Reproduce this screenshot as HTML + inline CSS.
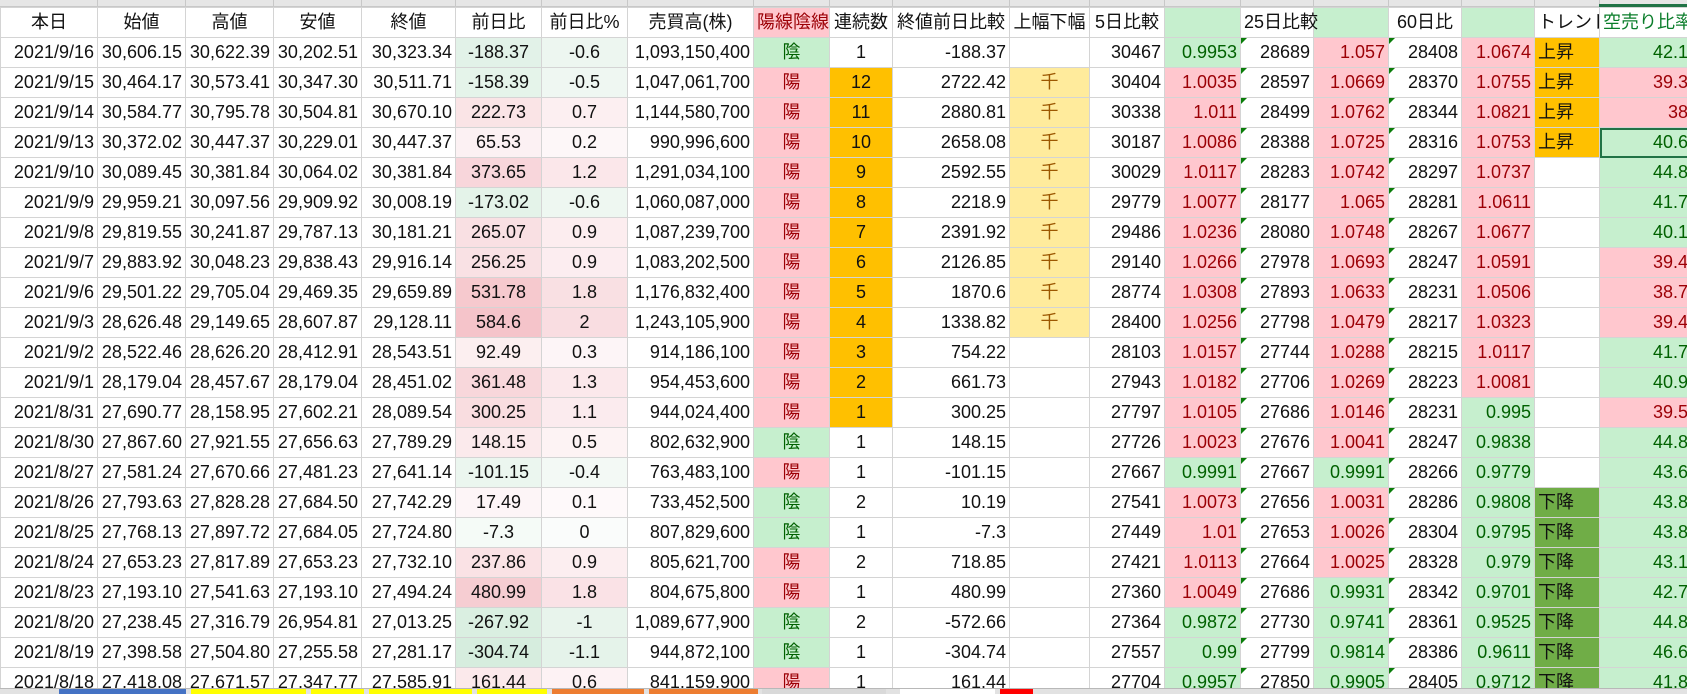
<!DOCTYPE html>
<html><head><meta charset="utf-8"><style>
html,body{margin:0;padding:0;background:#fff;width:1687px;height:694px;overflow:hidden}
body{position:relative;font-family:"Liberation Sans","Noto Sans CJK JP",sans-serif;font-size:18px;color:#111}
.strip{position:absolute;left:0;top:0;width:1687px;height:7px;background:#e6e6e6;border-bottom:1px solid #c8c8c8;box-sizing:border-box}
.strip i{position:absolute;top:0;width:1px;height:7px;background:#c8c8c8}
table{position:absolute;left:0;top:7px;border-collapse:collapse;table-layout:fixed;width:1691px}
td{border:1px solid #d4d4d4;height:29px;padding:0 3px;white-space:nowrap;overflow:visible;line-height:29px;box-sizing:border-box}
tr.h td{height:29px;text-align:center}
td{text-align:right}
.c{text-align:center}.l{text-align:left}
.p{background:#ffc7ce;color:#9c0006}
.g{background:#c6efce;color:#006100}
.y{background:#ffeb9c;color:#9c5700}
.o{background:#ffc000}
.dg{background:#70ad47}
.t{position:relative}
.t:before{content:"";position:absolute;left:0;top:0;border-top:6px solid #0a7d0a;border-right:6px solid transparent}
.sel{outline:2px solid #217346;outline-offset:-2px}
.tabs{position:absolute;left:0;top:688px;width:1687px;height:6px;background:#e2e2e2;border-top:1px solid #b8b8b8;box-sizing:border-box}
.tabs i{position:absolute;top:0;height:6px}
</style></head><body>
<div class="strip"><i style="left:97px"></i><i style="left:185px"></i><i style="left:273px"></i><i style="left:361px"></i><i style="left:455px"></i><i style="left:541px"></i><i style="left:627px"></i><i style="left:753px"></i><i style="left:829px"></i><i style="left:892px"></i><i style="left:1009px"></i><i style="left:1089px"></i><i style="left:1164px"></i><i style="left:1240px"></i><i style="left:1313px"></i><i style="left:1388px"></i><i style="left:1461px"></i><i style="left:1534px"></i><i style="left:1599px"></i><div style="position:absolute;left:1599px;top:4px;width:88px;height:3px;background:#217346"></div></div>
<table>
<colgroup><col style="width:97px"><col style="width:88px"><col style="width:88px"><col style="width:88px"><col style="width:94px"><col style="width:86px"><col style="width:86px"><col style="width:126px"><col style="width:76px"><col style="width:63px"><col style="width:117px"><col style="width:80px"><col style="width:75px"><col style="width:76px"><col style="width:73px"><col style="width:75px"><col style="width:73px"><col style="width:73px"><col style="width:65px"><col style="width:92px"></colgroup>
<tr class="h"><td>本日</td><td>始値</td><td>高値</td><td>安値</td><td>終値</td><td>前日比</td><td>前日比%</td><td>売買高(株)</td><td class="p">陽線陰線</td><td>連続数</td><td>終値前日比較</td><td>上幅下幅</td><td class="l">5日比較</td><td class="g"></td><td class="l">25日比較</td><td class="g"></td><td class="l">60日比</td><td class="g"></td><td class="l" style="overflow:hidden">トレンド</td><td class="l" style="color:#0a7d2a">空売り比率</td></tr>
<tr><td>2021/9/16</td><td>30,606.15</td><td>30,622.39</td><td>30,202.51</td><td>30,323.34</td><td class="c" style="background:rgb(226,242,232)">-188.37</td><td class="c" style="background:rgb(237,246,240)">-0.6</td><td>1,093,150,400</td><td class="c g">陰</td><td class="c">1</td><td>-188.37</td><td></td><td>30467</td><td class="g">0.9953</td><td class="t">28689</td><td class="p">1.057</td><td class="t">28408</td><td class="p">1.0674</td><td class="l o">上昇</td><td class="g">42.1</td></tr>
<tr><td>2021/9/15</td><td>30,464.17</td><td>30,573.41</td><td>30,347.30</td><td>30,511.71</td><td class="c" style="background:rgb(229,244,234)">-158.39</td><td class="c" style="background:rgb(239,247,242)">-0.5</td><td>1,047,061,700</td><td class="c p">陽</td><td class="c o">12</td><td>2722.42</td><td class="c y">千</td><td>30404</td><td class="p">1.0035</td><td class="t">28597</td><td class="p">1.0669</td><td class="t">28370</td><td class="p">1.0755</td><td class="l o">上昇</td><td class="p">39.3</td></tr>
<tr><td>2021/9/14</td><td>30,584.77</td><td>30,795.78</td><td>30,504.81</td><td>30,670.10</td><td class="c" style="background:rgb(250,228,230)">222.73</td><td class="c" style="background:rgb(252,239,241)">0.7</td><td>1,144,580,700</td><td class="c p">陽</td><td class="c o">11</td><td>2880.81</td><td class="c y">千</td><td>30338</td><td class="p">1.011</td><td class="t">28499</td><td class="p">1.0762</td><td class="t">28344</td><td class="p">1.0821</td><td class="l o">上昇</td><td class="p">38</td></tr>
<tr><td>2021/9/13</td><td>30,372.02</td><td>30,447.37</td><td>30,229.01</td><td>30,447.37</td><td class="c" style="background:rgb(252,241,243)">65.53</td><td class="c" style="background:rgb(253,247,248)">0.2</td><td>990,996,600</td><td class="c p">陽</td><td class="c o">10</td><td>2658.08</td><td class="c y">千</td><td>30187</td><td class="p">1.0086</td><td class="t">28388</td><td class="p">1.0725</td><td class="t">28316</td><td class="p">1.0753</td><td class="l o">上昇</td><td class="g sel">40.6</td></tr>
<tr><td>2021/9/10</td><td>30,089.45</td><td>30,381.84</td><td>30,064.02</td><td>30,381.84</td><td class="c" style="background:rgb(248,214,219)">373.65</td><td class="c" style="background:rgb(251,231,234)">1.2</td><td>1,291,034,100</td><td class="c p">陽</td><td class="c o">9</td><td>2592.55</td><td class="c y">千</td><td>30029</td><td class="p">1.0117</td><td class="t">28283</td><td class="p">1.0742</td><td class="t">28297</td><td class="p">1.0737</td><td></td><td class="g">44.8</td></tr>
<tr><td>2021/9/9</td><td>29,959.21</td><td>30,097.56</td><td>29,909.92</td><td>30,008.19</td><td class="c" style="background:rgb(228,243,233)">-173.02</td><td class="c" style="background:rgb(238,247,241)">-0.6</td><td>1,060,087,000</td><td class="c p">陽</td><td class="c o">8</td><td>2218.9</td><td class="c y">千</td><td>29779</td><td class="p">1.0077</td><td class="t">28177</td><td class="p">1.065</td><td class="t">28281</td><td class="p">1.0611</td><td></td><td class="g">41.7</td></tr>
<tr><td>2021/9/8</td><td>29,819.55</td><td>30,241.87</td><td>29,787.13</td><td>30,181.21</td><td class="c" style="background:rgb(249,224,227)">265.07</td><td class="c" style="background:rgb(252,237,239)">0.9</td><td>1,087,239,700</td><td class="c p">陽</td><td class="c o">7</td><td>2391.92</td><td class="c y">千</td><td>29486</td><td class="p">1.0236</td><td class="t">28080</td><td class="p">1.0748</td><td class="t">28267</td><td class="p">1.0677</td><td></td><td class="g">40.1</td></tr>
<tr><td>2021/9/7</td><td>29,883.92</td><td>30,048.23</td><td>29,838.43</td><td>29,916.14</td><td class="c" style="background:rgb(249,225,228)">256.25</td><td class="c" style="background:rgb(252,237,240)">0.9</td><td>1,083,202,500</td><td class="c p">陽</td><td class="c o">6</td><td>2126.85</td><td class="c y">千</td><td>29140</td><td class="p">1.0266</td><td class="t">27978</td><td class="p">1.0693</td><td class="t">28247</td><td class="p">1.0591</td><td></td><td class="p">39.4</td></tr>
<tr><td>2021/9/6</td><td>29,501.22</td><td>29,705.04</td><td>29,469.35</td><td>29,659.89</td><td class="c" style="background:rgb(246,201,206)">531.78</td><td class="c" style="background:rgb(249,224,227)">1.8</td><td>1,176,832,400</td><td class="c p">陽</td><td class="c o">5</td><td>1870.6</td><td class="c y">千</td><td>28774</td><td class="p">1.0308</td><td class="t">27893</td><td class="p">1.0633</td><td class="t">28231</td><td class="p">1.0506</td><td></td><td class="p">38.7</td></tr>
<tr><td>2021/9/3</td><td>28,626.48</td><td>29,149.65</td><td>28,607.87</td><td>29,128.11</td><td class="c" style="background:rgb(245,196,202)">584.6</td><td class="c" style="background:rgb(249,221,225)">2</td><td>1,243,105,900</td><td class="c p">陽</td><td class="c o">4</td><td>1338.82</td><td class="c y">千</td><td>28400</td><td class="p">1.0256</td><td class="t">27798</td><td class="p">1.0479</td><td class="t">28217</td><td class="p">1.0323</td><td></td><td class="p">39.4</td></tr>
<tr><td>2021/9/2</td><td>28,522.46</td><td>28,626.20</td><td>28,412.91</td><td>28,543.51</td><td class="c" style="background:rgb(252,239,240)">92.49</td><td class="c" style="background:rgb(253,245,247)">0.3</td><td>914,186,100</td><td class="c p">陽</td><td class="c o">3</td><td>754.22</td><td></td><td>28103</td><td class="p">1.0157</td><td class="t">27744</td><td class="p">1.0288</td><td class="t">28215</td><td class="p">1.0117</td><td></td><td class="g">41.7</td></tr>
<tr><td>2021/9/1</td><td>28,179.04</td><td>28,457.67</td><td>28,179.04</td><td>28,451.02</td><td class="c" style="background:rgb(248,215,219)">361.48</td><td class="c" style="background:rgb(251,232,235)">1.3</td><td>954,453,600</td><td class="c p">陽</td><td class="c o">2</td><td>661.73</td><td></td><td>27943</td><td class="p">1.0182</td><td class="t">27706</td><td class="p">1.0269</td><td class="t">28223</td><td class="p">1.0081</td><td></td><td class="g">40.9</td></tr>
<tr><td>2021/8/31</td><td>27,690.77</td><td>28,158.95</td><td>27,602.21</td><td>28,089.54</td><td class="c" style="background:rgb(249,221,224)">300.25</td><td class="c" style="background:rgb(251,235,238)">1.1</td><td>944,024,400</td><td class="c p">陽</td><td class="c o">1</td><td>300.25</td><td></td><td>27797</td><td class="p">1.0105</td><td class="t">27686</td><td class="p">1.0146</td><td class="t">28231</td><td class="g">0.995</td><td></td><td class="p">39.5</td></tr>
<tr><td>2021/8/30</td><td>27,867.60</td><td>27,921.55</td><td>27,656.63</td><td>27,789.29</td><td class="c" style="background:rgb(251,234,236)">148.15</td><td class="c" style="background:rgb(253,243,244)">0.5</td><td>802,632,900</td><td class="c g">陰</td><td class="c">1</td><td>148.15</td><td></td><td>27726</td><td class="p">1.0023</td><td class="t">27676</td><td class="p">1.0041</td><td class="t">28247</td><td class="g">0.9838</td><td></td><td class="g">44.8</td></tr>
<tr><td>2021/8/27</td><td>27,581.24</td><td>27,670.66</td><td>27,481.23</td><td>27,641.14</td><td class="c" style="background:rgb(235,246,239)">-101.15</td><td class="c" style="background:rgb(243,249,245)">-0.4</td><td>763,483,100</td><td class="c p">陽</td><td class="c">1</td><td>-101.15</td><td></td><td>27667</td><td class="g">0.9991</td><td class="t">27667</td><td class="g">0.9991</td><td class="t">28266</td><td class="g">0.9779</td><td></td><td class="g">43.6</td></tr>
<tr><td>2021/8/26</td><td>27,793.63</td><td>27,828.28</td><td>27,684.50</td><td>27,742.29</td><td class="c" style="background:rgb(253,245,247)">17.49</td><td class="c" style="background:rgb(254,249,250)">0.1</td><td>733,452,500</td><td class="c g">陰</td><td class="c">2</td><td>10.19</td><td></td><td>27541</td><td class="p">1.0073</td><td class="t">27656</td><td class="p">1.0031</td><td class="t">28286</td><td class="g">0.9808</td><td class="l dg">下降</td><td class="g">43.8</td></tr>
<tr><td>2021/8/25</td><td>27,768.13</td><td>27,897.72</td><td>27,684.05</td><td>27,724.80</td><td class="c" style="background:rgb(245,251,247)">-7.3</td><td class="c" style="background:rgb(250,252,251)">0</td><td>807,829,600</td><td class="c g">陰</td><td class="c">1</td><td>-7.3</td><td></td><td>27449</td><td class="p">1.01</td><td class="t">27653</td><td class="p">1.0026</td><td class="t">28304</td><td class="g">0.9795</td><td class="l dg">下降</td><td class="g">43.8</td></tr>
<tr><td>2021/8/24</td><td>27,653.23</td><td>27,817.89</td><td>27,653.23</td><td>27,732.10</td><td class="c" style="background:rgb(250,226,229)">237.86</td><td class="c" style="background:rgb(252,238,240)">0.9</td><td>805,621,700</td><td class="c p">陽</td><td class="c">2</td><td>718.85</td><td></td><td>27421</td><td class="p">1.0113</td><td class="t">27664</td><td class="p">1.0025</td><td class="t">28328</td><td class="g">0.979</td><td class="l dg">下降</td><td class="g">43.1</td></tr>
<tr><td>2021/8/23</td><td>27,193.10</td><td>27,541.63</td><td>27,193.10</td><td>27,494.24</td><td class="c" style="background:rgb(246,205,210)">480.99</td><td class="c" style="background:rgb(250,226,230)">1.8</td><td>804,675,800</td><td class="c p">陽</td><td class="c">1</td><td>480.99</td><td></td><td>27360</td><td class="p">1.0049</td><td class="t">27686</td><td class="g">0.9931</td><td class="t">28342</td><td class="g">0.9701</td><td class="l dg">下降</td><td class="g">42.7</td></tr>
<tr><td>2021/8/20</td><td>27,238.45</td><td>27,316.79</td><td>26,954.81</td><td>27,013.25</td><td class="c" style="background:rgb(218,239,225)">-267.92</td><td class="c" style="background:rgb(232,244,236)">-1</td><td>1,089,677,900</td><td class="c g">陰</td><td class="c">2</td><td>-572.66</td><td></td><td>27364</td><td class="g">0.9872</td><td class="t">27730</td><td class="g">0.9741</td><td class="t">28361</td><td class="g">0.9525</td><td class="l dg">下降</td><td class="g">44.8</td></tr>
<tr><td>2021/8/19</td><td>27,398.58</td><td>27,504.80</td><td>27,255.58</td><td>27,281.17</td><td class="c" style="background:rgb(214,237,222)">-304.74</td><td class="c" style="background:rgb(229,243,234)">-1.1</td><td>944,872,100</td><td class="c g">陰</td><td class="c">1</td><td>-304.74</td><td></td><td>27557</td><td class="g">0.99</td><td class="t">27799</td><td class="g">0.9814</td><td class="t">28386</td><td class="g">0.9611</td><td class="l dg">下降</td><td class="g">46.6</td></tr>
<tr><td>2021/8/18</td><td>27,418.08</td><td>27,671.57</td><td>27,347.77</td><td>27,585.91</td><td class="c" style="background:rgb(251,233,235)">161.44</td><td class="c" style="background:rgb(253,242,244)">0.6</td><td>841,159,900</td><td class="c p">陽</td><td class="c">1</td><td>161.44</td><td></td><td>27704</td><td class="g">0.9957</td><td class="t">27850</td><td class="g">0.9905</td><td class="t">28405</td><td class="g">0.9712</td><td class="l dg">下降</td><td class="g">41.8</td></tr>
</table>
<div class="tabs">
<i style="left:59px;width:127px;background:#4472c4"></i>
<i style="left:191px;width:115px;background:#ffff00"></i>
<i style="left:311px;width:53px;background:#ffff00"></i>
<i style="left:369px;width:103px;background:#ffff00"></i>
<i style="left:477px;width:70px;background:#ffff00"></i>
<i style="left:552px;width:92px;background:#ed7d31"></i>
<i style="left:649px;width:109px;background:#ed7d31"></i>
<i style="left:762px;width:124px;background:#d9d9d9"></i>
<i style="left:900px;width:95px;background:#ffffff"></i>
<i style="left:1000px;width:33px;background:#ff0000"></i>
</div>
</body></html>
